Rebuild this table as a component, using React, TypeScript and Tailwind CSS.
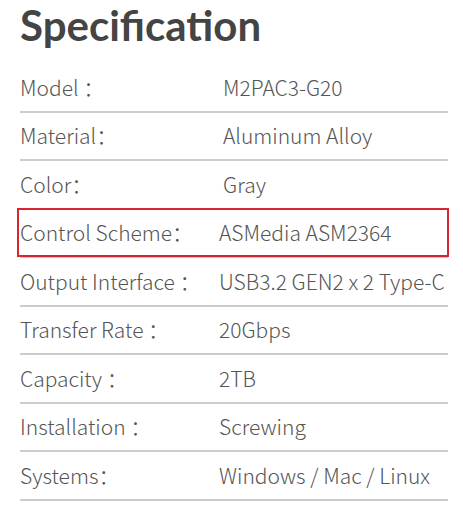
import React from 'react';

const specs = [
  { label: 'Model ：', value: 'M2PAC3-G20', shift: true },
  { label: 'Material：', value: 'Aluminum Alloy', shift: true },
  { label: 'Color：', value: 'Gray', shift: true },
  { label: 'Control Scheme：', value: 'ASMedia ASM2364', boxed: true },
  { label: 'Output Interface ：', value: 'USB3.2 GEN2 x 2 Type-C' },
  { label: 'Transfer Rate ：', value: '20Gbps' },
  { label: 'Capacity ：', value: '2TB' },
  { label: 'Installation ：', value: 'Screwing' },
  { label: 'Systems：', value: 'Windows / Mac / Linux' },
];

const App: React.FC = () => {
  return (
    <div className="w-[463px] h-[511px] bg-white overflow-hidden">
      <h1
        className="pl-[20px] h-[64px] text-[42px] font-bold leading-[50px] text-[#444]"
        style={{ fontFamily: 'Lato, sans-serif' }}
      >
        Specification
      </h1>
      <div
        className="pl-[20px] pr-[15px] text-[21px] font-light text-[#555]"
        style={{ fontFamily: '"Noto Sans CJK SC", sans-serif' }}
      >
        {specs.map((s) => (
          <div
            key={s.label}
            className="relative flex items-center h-[48.5px] border-b-2 border-[#cccccc]"
          >
            <span className="w-[199px] shrink-0 whitespace-pre">{s.label}</span>
            <span className={s.shift ? 'pl-[4px] whitespace-nowrap' : 'whitespace-nowrap'}>{s.value}</span>
            {s.boxed && (
              <div className="absolute left-[-3px] right-[-1px] top-[-2px] bottom-[-1px] border-2 border-[#d7262d]" />
            )}
          </div>
        ))}
      </div>
    </div>
  );
};

export default App;
